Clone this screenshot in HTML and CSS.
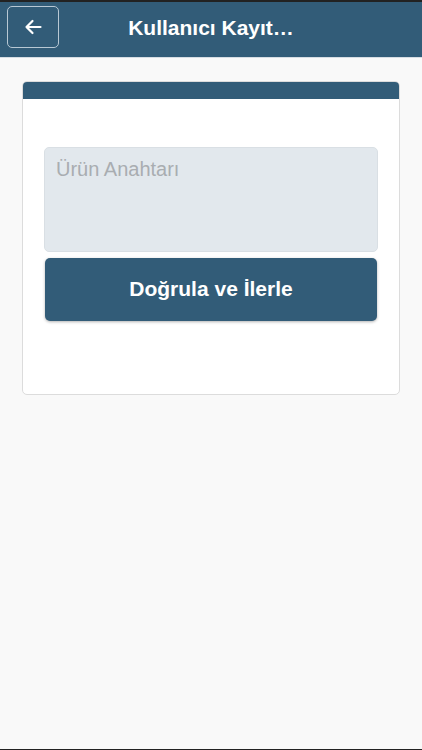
FILE: index.html
```html
<!DOCTYPE html>
<html lang="tr">
<head>
  <meta charset="UTF-8">
  <meta name="viewport" content="width=device-width, initial-scale=1.0">
  <title>Kullanıcı Kayıt</title>
  <link rel="stylesheet" href="styles.css">
</head>
<body>
  <div id="header">
    <button class="back">
      <svg width="18" height="16" viewBox="0 0 18 16">
        <path d="M16.5 8H2.5M8.5 2L2.5 8l6 6" fill="none" stroke="#fff" stroke-width="2.2" stroke-linecap="round" stroke-linejoin="round"/>
      </svg>
    </button>
    <h1 class="title">Kullanıcı Kayıt…</h1>
  </div>

  <div id="content">
    <div class="card">
      <div class="card-top"></div>
      <div class="card-body">
        <textarea class="key" placeholder="Ürün Anahtarı"></textarea>
        <button class="verify">Doğrula ve İlerle</button>
      </div>
    </div>
  </div>
</body>
</html>
```

FILE: styles.css
```css
html, body {
  height: 100%;
}
body {
  margin: 0;
  font-family: 'Liberation Sans', Arial, sans-serif;
  background-color: #f9f9f9;
  border-top: 2px solid #222;
  border-bottom: 1px solid #222;
  box-sizing: border-box;
}
#header {
  position: relative;
  display: flex;
  align-items: center;
  justify-content: center;
  height: 55px;
  background-color: #325c78;
  border-bottom: 1px solid #d6dde3;
}
.back {
  position: absolute;
  left: 7px;
  top: 4px;
  width: 52px;
  height: 42px;
  display: flex;
  align-items: center;
  justify-content: center;
  padding: 0;
  background-color: transparent;
  border: 1px solid #b8c8d4;
  border-radius: 5px;
  cursor: pointer;
}
.title {
  margin: 0 0 3px 0;
  font-size: 21px;
  font-weight: bold;
  color: #fff;
}
#content {
  padding: 23px 22px 0 22px;
}
.card {
  background-color: #fff;
  border: 1px solid #dcdcdc;
  border-radius: 5px;
  overflow: hidden;
}
.card-top {
  height: 17px;
  background-color: #325c78;
}
.card-body {
  display: flex;
  flex-direction: column;
  gap: 6px;
  padding: 48px 21px 73px 21px;
}
.key {
  box-sizing: border-box;
  height: 105px;
  margin: 0;
  padding: 10px 11px;
  font-family: 'Liberation Sans', Arial, sans-serif;
  font-size: 20px;
  color: #333;
  background-color: #e2e8ed;
  border: 1px solid #d9dfe4;
  border-radius: 5px;
  resize: none;
  outline: none;
}
.key::placeholder {
  color: #a9adb1;
}
.verify {
  height: 63px;
  margin: 0 1px;
  padding: 0 0 2px 0;
  font-family: 'Liberation Sans', Arial, sans-serif;
  font-size: 21px;
  font-weight: bold;
  color: #fff;
  background-color: #325c78;
  border: none;
  border-radius: 5px;
  box-shadow: 0 1px 3px rgba(0, 0, 0, 0.3);
  cursor: pointer;
}
```
